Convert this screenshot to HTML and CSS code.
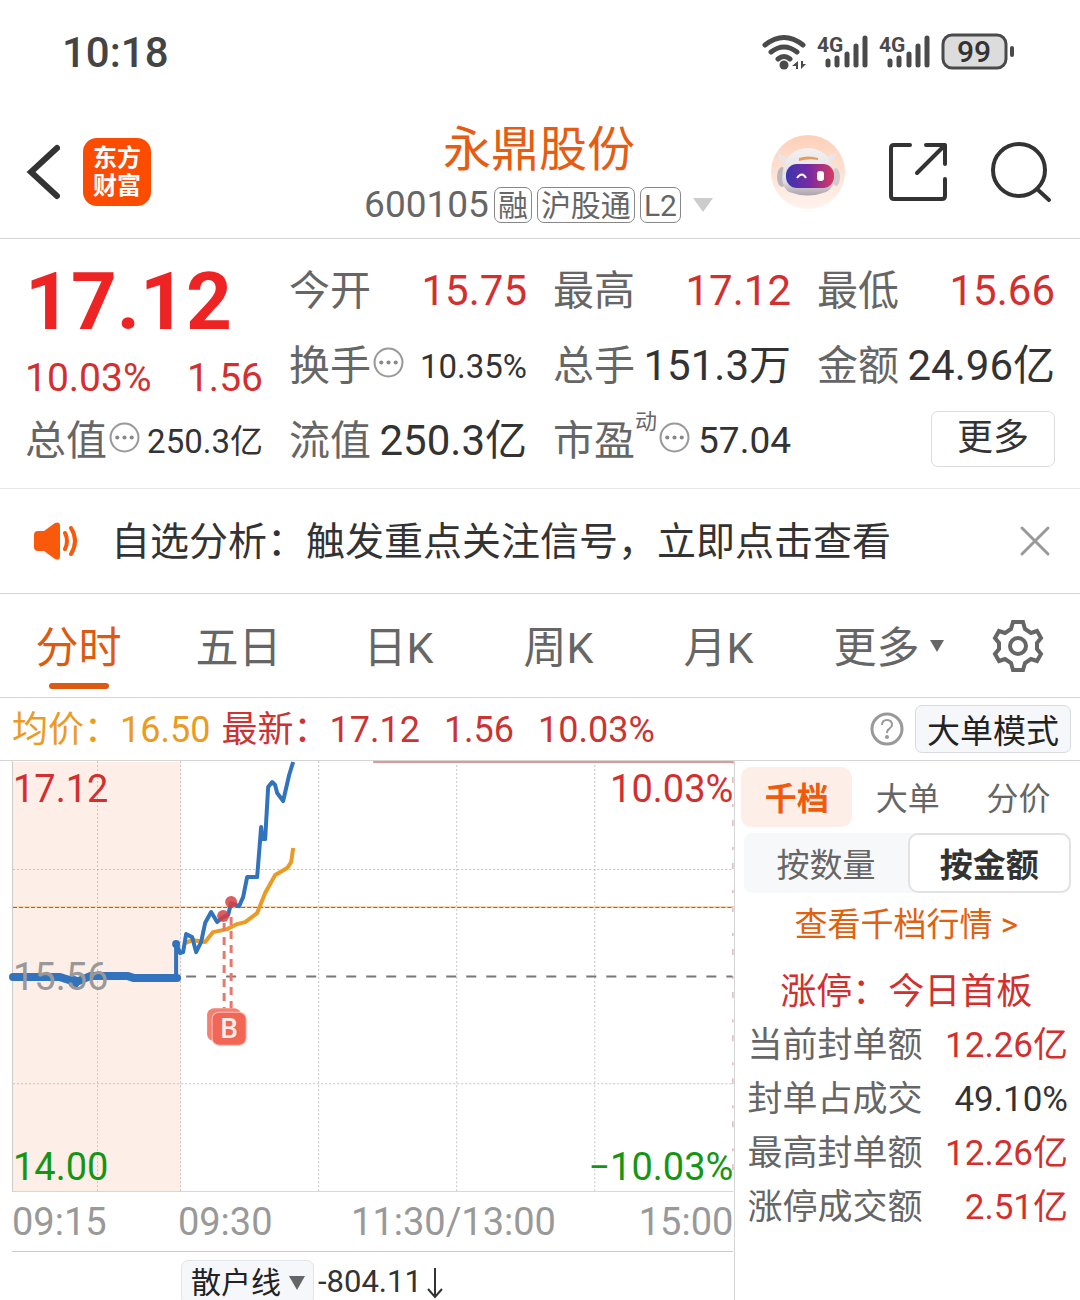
FILE: index.html
```html
<!DOCTYPE html>
<html lang="zh-CN">
<head>
<meta charset="utf-8">
<meta name="viewport" content="width=device-width, initial-scale=1">
<title>永鼎股份 600105</title>
<link rel="stylesheet" href="styles.css">
</head>
<body>

<div class="status-bar">
  <span class="clock">10:18</span>
  <svg class="status-icons" width="256" height="44" viewBox="0 0 256 44" aria-hidden="true">
    <g fill="none" stroke="#4a4a4a" stroke-width="5" stroke-linecap="round">
      <path d="M5 15Q24 0 43 15M11 22Q24 12 37 22M18 29Q24 24 30 29"/>
    </g>
    <circle cx="24" cy="35" r="4.500" fill="#4a4a4a"/>
    <path d="M38 31v8h-2v-3h-4zM41 31v8l5-5h-3v-3z" fill="#4a4a4a"/>
    <g stroke="#4a4a4a" stroke-width="5" stroke-linecap="round">
      <path d="M68 31v4M77 28v7M87 24v11M96 16v19M105 8v27"/>
      <path d="M130 31v4M139 28v7M149 24v11M158 16v19M167 8v27"/>
    </g>
    <g class="net" fill="#4a4a4a">
      <text x="57" y="22">4G</text>
      <text x="119" y="22">4G</text>
    </g>
    <rect x="183" y="5" width="63" height="33" rx="9" fill="#dcdcdc" stroke="#4a4a4a" stroke-width="3"/>
    <path d="M252 18v7" stroke="#4a4a4a" stroke-width="4" stroke-linecap="round"/>
    <text class="battery" x="214" y="32" text-anchor="middle" fill="#333">99</text>
  </svg>
</div>

<header class="header">
  <div class="header-left">
    <button class="icon-btn" aria-label="返回">
      <svg width="34" height="56" viewBox="0 0 34 56"><path d="M31 4L5 28L31 52" fill="none" stroke="#333" stroke-width="6" stroke-linecap="round"/></svg>
    </button>
    <a class="logo" href="#">东方<br>财富</a>
  </div>
  <div class="header-title">
    <h1>永鼎股份</h1>
    <div class="code">
      <span>600105</span>
      <span class="tag">融</span>
      <span class="tag">沪股通</span>
      <span class="tag">L2</span>
      <svg width="22" height="16" viewBox="0 0 22 16"><path d="M1 1h20L11 15z" fill="#ccc"/></svg>
    </div>
  </div>
  <div class="header-right">
    <button class="icon-btn" aria-label="智能助手">
      <svg width="76" height="76" viewBox="0 0 76 76">
        <defs>
          <linearGradient id="halo" x1="0" y1="0" x2="0" y2="1"><stop offset="0" stop-color="#fdd0b8"/><stop offset="1" stop-color="#fef3ee"/></linearGradient>
          <linearGradient id="visor"><stop offset="0" stop-color="#3a35b0"/><stop offset=".5" stop-color="#7a2aa0"/><stop offset="1" stop-color="#d83a5e"/></linearGradient>
          <linearGradient id="shell" x1="0" y1="0" x2="0" y2="1"><stop offset="0" stop-color="#f4f1f2"/><stop offset=".7" stop-color="#e2dde0"/><stop offset="1" stop-color="#aaa3ac"/></linearGradient>
        </defs>
        <circle cx="38" cy="38" r="37" fill="url(#halo)"/>
        <path d="M8 17Q7 28 16 29L22 23Q11 24 8 17zM66 16Q67 27 59 28L54 22Q64 23 66 16z" fill="#e9e5e8"/>
        <ellipse cx="12" cy="43" rx="5" ry="10" fill="#bdb6bd"/>
        <ellipse cx="66" cy="43" rx="4" ry="9" fill="#d0c9ce"/>
        <path d="M13 36Q17 15 38 14Q58 15 63 35Q67 53 56 58Q38 65 19 58Q10 52 13 36z" fill="url(#shell)"/>
        <path d="M29 24Q38 21 48 24v2Q38 24 29 27z" fill="#e69a5c"/>
        <rect x="16" y="30" width="48" height="24" rx="11" fill="url(#visor)"/>
        <path d="M27 44Q32 37 36 44" fill="none" stroke="#fff" stroke-width="2"/>
        <rect x="47" y="37" width="7" height="10" rx="3" fill="#fff"/>
      </svg>
    </button>
    <button class="icon-btn" aria-label="分享">
      <svg width="60" height="60" viewBox="0 0 60 60" fill="none" stroke="#333" stroke-width="4" stroke-linecap="round" stroke-linejoin="round">
        <path d="M22 3H6Q3 3 3 6V54Q3 57 6 57H54Q57 57 57 54V37M38 3H57V22M57 3L29 31"/>
      </svg>
    </button>
    <button class="icon-btn" aria-label="搜索">
      <svg width="62" height="62" viewBox="0 0 62 62" fill="none" stroke="#333" stroke-width="4" stroke-linecap="round">
        <circle cx="29" cy="29" r="26"/><path d="M47 48L59 59"/>
      </svg>
    </button>
  </div>
</header>

<section class="quote">
  <div class="quote-col">
    <div class="price">17.12</div>
    <div class="change"><span>10.03%</span><span>1.56</span></div>
    <div class="cell"><span class="label">总值</span><svg class="dots" viewBox="0 0 30 30"><use href="#dots"/></svg><span class="value small">250.3亿</span></div>
  </div>
  <div class="quote-col">
    <div class="cell"><span class="label">今开</span><span class="value up">15.75</span></div>
    <div class="cell"><span class="label">换手</span><svg class="dots" viewBox="0 0 30 30"><use href="#dots"/></svg><span class="value small">10.35%</span></div>
    <div class="cell"><span class="label">流值</span><span class="value">250.3亿</span></div>
  </div>
  <div class="quote-col">
    <div class="cell"><span class="label">最高</span><span class="value up">17.12</span></div>
    <div class="cell"><span class="label">总手</span><span class="value">151.3万</span></div>
    <div class="cell"><span class="label">市盈</span><span class="sup">动</span><svg class="dots" viewBox="0 0 30 30"><use href="#dots"/></svg><span class="value mid">57.04</span></div>
  </div>
  <div class="quote-col">
    <div class="cell"><span class="label">最低</span><span class="value up">15.66</span></div>
    <div class="cell"><span class="label">金额</span><span class="value">24.96亿</span></div>
    <div class="cell"><button class="more-btn">更多</button></div>
  </div>
</section>

<section class="notice">
  <svg width="46" height="40" viewBox="0 0 46 40">
    <path d="M1 14Q1 10 5 10H11L22 2Q27 0 27 5V35Q27 40 22 38L11 30H5Q1 30 1 26z" fill="#f9590b"/>
    <path d="M32 12Q36 20 32 28M38 7Q46 20 38 33" fill="none" stroke="#f9590b" stroke-width="4" stroke-linecap="round"/>
  </svg>
  <a class="notice-text" href="#">自选分析：触发重点关注信号，立即点击查看</a>
  <button class="icon-btn" aria-label="关闭">
    <svg width="32" height="32" viewBox="0 0 32 32"><path d="M3 3L29 29M29 3L3 29" stroke="#999" stroke-width="3" stroke-linecap="round"/></svg>
  </button>
</section>

<nav class="tabs">
  <button class="tab active">分时</button>
  <button class="tab">五日</button>
  <button class="tab">日K</button>
  <button class="tab">周K</button>
  <button class="tab">月K</button>
  <button class="tab tab-more">更多<svg width="14" height="12" viewBox="0 0 14 12"><path d="M0 0h14L7 12z" fill="#666"/></svg></button>
  <button class="icon-btn tab-gear" aria-label="设置">
    <svg width="54" height="54" viewBox="0 0 54 54" fill="none" stroke="#666" stroke-width="4" stroke-linejoin="miter">
      <path d="M22 3H32L34 10L40 14L46 12L50 19L46 24V30L50 35L46 42L40 40L34 44L32 51H22L20 44L14 40L8 42L4 35L8 30V24L4 19L8 12L14 14L20 10z"/>
      <circle cx="27" cy="27" r="8"/>
    </svg>
  </button>
</nav>

<div class="info-bar">
  <span class="avg">均价：16.50</span>
  <span class="last"><span>最新：17.12</span><span>1.56</span><span>10.03%</span></span>
  <svg class="help" width="34" height="34" viewBox="0 0 34 34"><circle cx="17" cy="17" r="15" fill="none" stroke="#999" stroke-width="3"/><path d="M12 13Q12 8 17 8Q22 8 22 13Q22 15 19 17Q17 18 17 21" fill="none" stroke="#999" stroke-width="2"/><circle cx="17" cy="25" r="2" fill="#999"/></svg>
  <button class="mode-btn">大单模式</button>
</div>

<main class="main">
  <section class="chart-panel">
    <div class="chart">
      <svg class="chart-svg" viewBox="0 0 734 431">
        <rect x="13" y="1" width="168" height="429" fill="#fdeee7"/>
        <g stroke="#c4c4c4" stroke-dasharray="2 2">
          <path d="M97.500 0V430M180.500 0V430M318.500 0V430M456.500 0V430M594.500 0V430"/>
          <path d="M13 108.500H732M13 322.500H732"/>
        </g>
        <path d="M12.500 0V430.500H733" fill="none" stroke="#ccc"/>
        <path d="M732.500 0V430" stroke="#c99" stroke-dasharray="3 13 6 21"/>
        <path d="M373 1H733" stroke="#d99" stroke-width="2"/>
        <path d="M13 146H732" stroke="#fbd9b0" stroke-width="2"/>
        <path d="M13 146.500H732" stroke="#b0622e" stroke-dasharray="4 2"/>
        <path d="M186 215.500H732" stroke="#777" stroke-width="2" stroke-dasharray="10 10"/>
        <path d="M185 182L192 179L205 181L213 171L227 168L237 163L245 161L257 152L265 132L275 114L287 107L291 101L293 87" fill="none" stroke="#eb9a22" stroke-width="4" stroke-linejoin="round"/>
        <path d="M13 216H60L76 221L90 215H128L134 217H177" fill="none" stroke="#3173bd" stroke-width="8" stroke-linecap="round" stroke-linejoin="round"/>
        <circle cx="74" cy="221" r="6" fill="#3173bd"/>
        <circle cx="176" cy="183" r="4" fill="#3173bd"/>
        <path d="M176 217V182L180 192L183 191L186 173L192 176L196 191L201 181L205 162L211 151L217 161L223 156L228 154L231 142L239 145L243 136L247 116L257 116L261 66L262 78L265 78L268 26L272 21L275 24L277 32L283 40L289 14L293 1" fill="none" stroke="#3173bd" stroke-width="4" stroke-linejoin="round"/>
        <g stroke="#e9776c" stroke-width="3" stroke-dasharray="8 6">
          <path d="M224 162V247M231 156V247"/>
        </g>
        <g fill="#d93f42" fill-opacity=".85">
          <circle cx="223" cy="155" r="6"/><circle cx="231" cy="141" r="6"/>
        </g>
        <rect x="207" y="247" width="34" height="33" rx="7" fill="#f4816f"/>
        <rect x="212" y="251" width="34" height="33" rx="7" fill="#f26656" stroke="#fbb" stroke-width="1"/>
        <text class="marker" x="229" y="277" text-anchor="middle">B</text>
      </svg>
      <span class="mark top-left">17.12</span>
      <span class="mark top-right">10.03%</span>
      <span class="mark mid-left">15.56</span>
      <span class="mark bottom-left">14.00</span>
      <span class="mark bottom-right">−10.03%</span>
    </div>
    <div class="axis"><span>09:15</span><span>09:30</span><span>11:30/13:00</span><span>15:00</span></div>
    <div class="indicator">
      <span class="indicator-pick">
        <select aria-label="指标"><option>散户线</option></select>
        <svg width="16" height="14" viewBox="0 0 16 14"><path d="M0 0h16L8 14z" fill="#666"/></svg>
      </span>
      <span>-804.11</span>
      <svg width="18" height="44" viewBox="0 0 18 44"><path d="M9 8V36M2 29L9 37L16 29" fill="none" stroke="#333" stroke-width="2"/></svg>
    </div>
  </section>

  <aside class="side">
    <div class="side-tabs">
      <button class="side-tab active">千档</button>
      <button class="side-tab">大单</button>
      <button class="side-tab">分价</button>
    </div>
    <div class="segment">
      <button class="segment-btn">按数量</button>
      <button class="segment-btn active">按金额</button>
    </div>
    <a class="side-link" href="#">查看千档行情 &gt;</a>
    <h2>涨停：今日首板</h2>
    <table class="limit">
      <tr><th scope="row">当前封单额</th><td class="up">12.26亿</td></tr>
      <tr><th scope="row">封单占成交</th><td>49.10%</td></tr>
      <tr><th scope="row">最高封单额</th><td class="up">12.26亿</td></tr>
      <tr><th scope="row">涨停成交额</th><td class="up">2.51亿</td></tr>
    </table>
  </aside>
</main>

<svg class="symbols" aria-hidden="true">
  <symbol id="dots" viewBox="0 0 30 30">
    <circle cx="15" cy="15" r="13.500" fill="none" stroke="#999" stroke-width="2"/>
    <g fill="#888"><circle cx="8" cy="15" r="2"/><circle cx="15" cy="15" r="2"/><circle cx="22" cy="15" r="2"/></g>
  </symbol>
</svg>

</body>
</html>
```

FILE: styles.css
```css
* {
  box-sizing: border-box;
}
body {
  display: flex;
  flex-direction: column;
  min-height: 100vh;
  margin: 0;
  background: #fff;
  font-family: Roboto, "Noto Sans CJK SC", sans-serif;
  line-height: 1.2;
  color: #333;
  white-space: nowrap;
}
button,
select {
  padding: 0;
  border: 0;
  background: none;
  font-family: inherit;
  line-height: inherit;
  color: inherit;
  cursor: pointer;
}
a {
  color: inherit;
  text-decoration: none;
}
svg {
  display: block;
  flex: none;
}
h1,
h2 {
  margin: 0;
  font-weight: 400;
}
.up {
  color: #d32f2f;
}
.symbols {
  position: absolute;
  width: 0;
  height: 0;
}

/* status bar */
.status-bar {
  display: flex;
  align-items: center;
  justify-content: space-between;
  height: 106px;
  padding: 0 64px 0 62px;
}
.clock {
  font-size: 42px;
  font-weight: 500;
  color: #444;
}
.status-icons {
  margin-bottom: 2px;
}
.net {
  font-size: 21px;
  font-weight: 700;
}
.battery {
  font-size: 30px;
  font-weight: 500;
}

/* header */
.header {
  display: grid;
  grid-template-columns: 1fr auto 1fr;
  align-items: center;
  height: 133px;
  padding: 0 28px 0 26px;
  border-bottom: 1px solid #d5d5d5;
}
.icon-btn {
  display: flex;
  align-items: center;
  justify-content: center;
}
.header-left {
  display: flex;
  align-items: center;
  gap: 23px;
}
.logo {
  width: 68px;
  height: 68px;
  padding-top: 6px;
  border-radius: 14px;
  background: #fc4c02;
  font-size: 24px;
  font-weight: 700;
  line-height: 28px;
  text-align: center;
  color: #fff;
}
.header-title {
  padding-top: 6px;
  text-align: center;
}
.header-title h1 {
  font-size: 48px;
  line-height: 60px;
  color: #e65c12;
}
.code {
  display: flex;
  align-items: center;
  gap: 5px;
  height: 50px;
  font-size: 37px;
  color: #666;
}
.tag {
  height: 36px;
  padding: 0 3px;
  border: 1px solid #888;
  border-radius: 7px;
  font-size: 30px;
  line-height: 35px;
}
.code svg {
  margin-left: 6px;
}
.header-right {
  display: flex;
  align-items: center;
  justify-content: flex-end;
  gap: 42px;
}

/* quote */
.quote {
  display: grid;
  grid-template-columns: repeat(4, 1fr);
  gap: 26px;
  height: 250px;
  padding: 14px 25px 0;
  border-bottom: 1px solid #e8e8e8;
}
.price {
  height: 98px;
  font-size: 80px;
  font-weight: 700;
  line-height: 98px;
  color: #ee2424;
}
.change {
  display: flex;
  justify-content: space-between;
  height: 52px;
  font-size: 39px;
  line-height: 54px;
  color: #d32f2f;
}
.cell {
  display: flex;
  align-items: center;
  height: 75px;
  padding-top: 2px;
}
.label {
  font-size: 41px;
  color: #666;
}
.value {
  margin-left: auto;
  font-size: 42px;
}
.value.small {
  font-size: 33px;
}
.value.mid {
  font-size: 37px;
}
.dots {
  width: 31px;
  height: 31px;
  margin: 0 0 8px 2px;
}
.sup {
  align-self: flex-start;
  margin-top: 4px;
  font-size: 22px;
  color: #666;
}
.more-btn {
  width: 124px;
  height: 56px;
  margin: 0 0 6px auto;
  border: 1px solid #ddd;
  border-radius: 7px;
  font-size: 36px;
}

/* notice */
.notice {
  display: flex;
  align-items: center;
  height: 105px;
  padding: 0 29px 0 33px;
  border-bottom: 1px solid #d5d5d5;
}
.notice-text {
  flex: 1;
  margin-left: 32px;
  padding-top: 3px;
  font-size: 39px;
}

/* period tabs */
.tabs {
  display: grid;
  grid-template-columns: repeat(5, 16fr) 18fr 10fr;
  height: 104px;
  border-bottom: 1px solid #d5d5d5;
}
.tab {
  position: relative;
  padding: 6px 3px 0 0;
  font-size: 43px;
  color: #666;
}
.tab.active {
  color: #dd5a12;
}
.tab.active::after {
  content: "";
  position: absolute;
  bottom: 8px;
  left: calc(50% - 31px);
  width: 60px;
  height: 6px;
  border-radius: 3px;
  background: #dd5a12;
}
.tab-more {
  display: flex;
  align-items: center;
  justify-content: center;
  gap: 10px;
}
.tab-more svg {
  margin-bottom: 6px;
}
.tab-gear {
  padding-right: 24px;
}

/* average / latest price */
.info-bar {
  display: flex;
  align-items: center;
  gap: 11px;
  height: 63px;
  padding: 0 9px 0 12px;
  border-bottom: 1px solid #d5d5d5;
  font-size: 36px;
}
.avg,
.last {
  padding-top: 4px;
}
.avg {
  color: #eb9a22;
}
.last {
  display: flex;
  align-items: baseline;
  gap: 24px;
  color: #cc3333;
}
.help {
  margin-left: auto;
}
.mode-btn {
  width: 156px;
  height: 48px;
  padding-top: 5px;
  border: 1px solid #d8dade;
  border-radius: 7px;
  background: #f6f7fa;
  font-size: 33px;
  color: #222;
}

/* chart */
.main {
  display: grid;
  grid-template-columns: 68fr 32fr;
  flex: 1;
}
.chart-panel {
  min-width: 0;
}
.chart {
  position: relative;
}
.chart-svg {
  width: 100%;
  height: auto;
}
.marker {
  font-size: 28px;
  font-weight: 500;
  fill: #fdeee7;
}
.mark {
  position: absolute;
  font-size: 38px;
  line-height: 48px;
}
.top-left {
  top: 4px;
  left: 13px;
  color: #d32f2f;
}
.top-right {
  top: 4px;
  right: 1px;
  color: #d32f2f;
}
.mid-left {
  top: 192px;
  left: 13px;
  color: #999;
}
.bottom-left {
  bottom: 1px;
  left: 13px;
  color: #149614;
}
.bottom-right {
  right: 1px;
  bottom: 1px;
  color: #149614;
}
.axis {
  display: grid;
  grid-template-columns: 23% 24% 1fr auto;
  margin: 0 1px 0 12px;
  padding-top: 2px;
  border-bottom: 1px solid #ccc;
  font-size: 38px;
  line-height: 57px;
  color: #999;
}
.indicator {
  display: flex;
  gap: 4px;
  height: 48px;
  padding: 8px 0 0 181px;
  overflow: hidden;
  font-size: 31px;
  line-height: 44px;
}
.indicator-pick {
  position: relative;
  width: 133px;
}
.indicator-pick select {
  width: 100%;
  height: 44px;
  padding-left: 9px;
  border: 1px solid #e2e4e8;
  border-radius: 7px;
  background: #f6f7fa;
  font-size: 30px;
  color: #222;
  appearance: none;
}
.indicator-pick svg {
  position: absolute;
  top: 16px;
  right: 9px;
  pointer-events: none;
}

/* side panel */
.side {
  padding: 6px 9px 0 6px;
  border-left: 1px solid #d5d5d5;
}
.side-tabs {
  display: flex;
  margin-right: -3px;
}
.side-tab {
  flex: 1;
  height: 60px;
  padding-top: 5px;
  border-radius: 10px;
  font-size: 32px;
  color: #666;
}
.side-tab.active {
  background: #fdeee7;
  font-weight: 700;
  color: #f05a0c;
}
.segment {
  display: grid;
  grid-template-columns: 1fr 1fr;
  margin: 6px 0 0 3px;
  border-radius: 8px;
  background: #f7f8fa;
}
.segment-btn {
  height: 60px;
  padding-top: 5px;
  font-size: 33px;
  color: #666;
}
.segment-btn.active {
  border: 2px solid #e2e2e2;
  border-radius: 10px;
  background: #fff;
  font-weight: 700;
  color: #333;
}
.side-link {
  display: block;
  font-size: 33px;
  line-height: 64px;
  text-align: center;
  color: #e0610f;
}
.side h2 {
  margin-top: 8px;
  font-size: 36px;
  line-height: 54px;
  text-align: center;
  color: #d32f2f;
}
.limit {
  width: 100%;
  border-collapse: collapse;
  font-size: 35px;
}
.limit th {
  height: 54px;
  padding: 0 0 0 6px;
  font-weight: 400;
  text-align: left;
  color: #666;
}
.limit td {
  padding: 0 3px 0 0;
  text-align: right;
}
```
